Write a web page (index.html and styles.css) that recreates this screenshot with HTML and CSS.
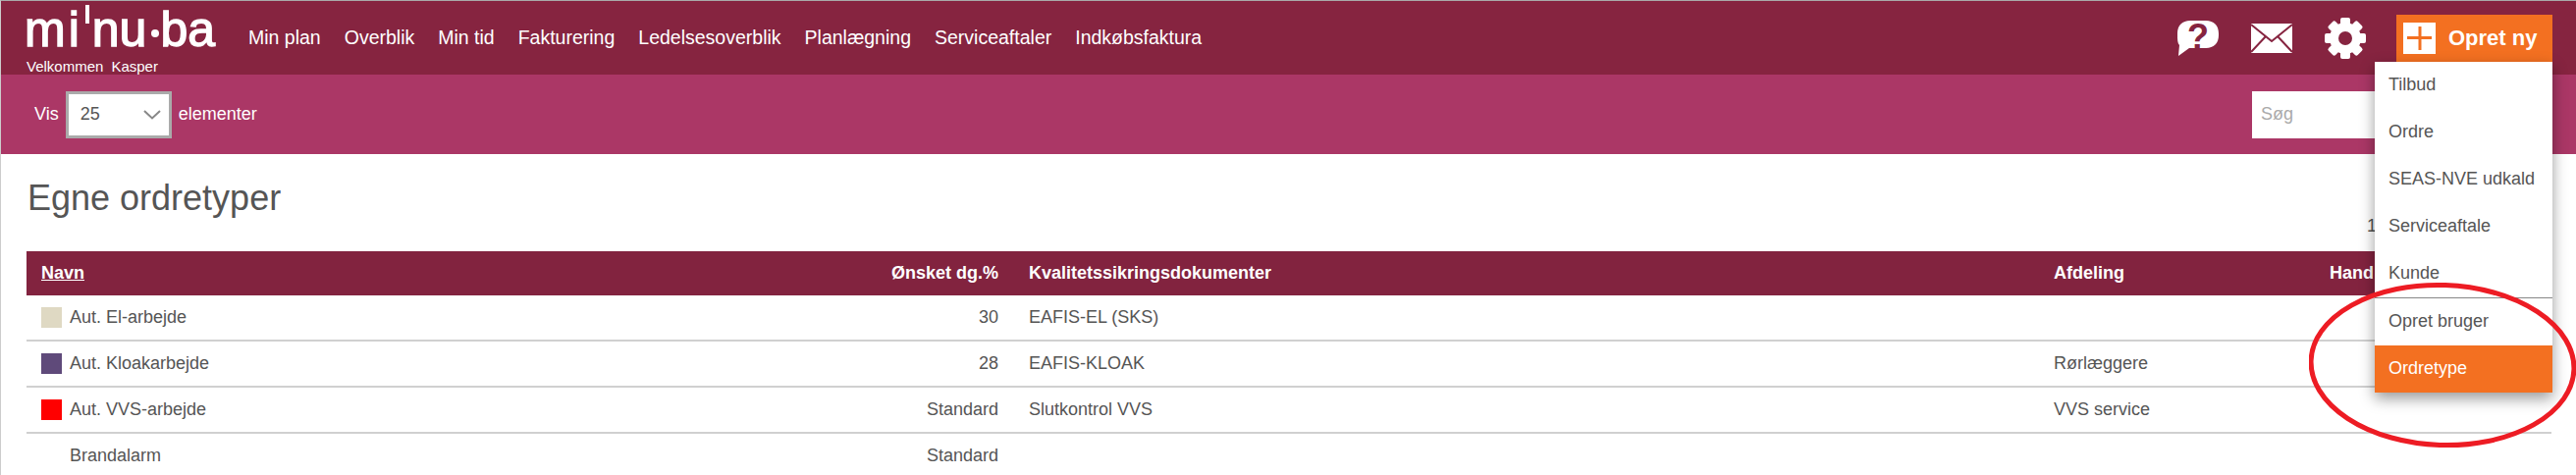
FILE: index.html
```html
<!DOCTYPE html>
<html lang="da">
<head>
    <meta charset="UTF-8">
    <meta name="viewport" content="width=device-width, initial-scale=1.0">
    <title>Egne ordretyper</title>
    <link rel="stylesheet" href="styles.css">
</head>
<body>
    <div class="page">
        <header class="top-bar">
            <div class="brand">
                <div class="logo">
                    <span class="logo-wide">mi</span>
                    <span class="logo-tick"></span>
                    <span>nu</span>
                    <span class="logo-dot"></span>
                    <span>ba</span>
                </div>
                <div class="welcome">
                    <span>Velkommen</span>
                    <span>Kasper</span>
                </div>
            </div>
            <nav class="main-nav">
                <a href="#">Min plan</a>
                <a href="#">Overblik</a>
                <a href="#">Min tid</a>
                <a href="#">Fakturering</a>
                <a href="#">Ledelsesoverblik</a>
                <a href="#">Planlægning</a>
                <a href="#">Serviceaftaler</a>
                <a href="#">Indkøbsfaktura</a>
            </nav>
            <div class="top-actions">
                <svg class="icon" width="42" height="44" viewBox="0 0 42 44">
                    <path fill="#fff" d="M13 4h16c8 0 13 5 13 13v2c0 8-5 13-13 13H12L1 40l1-11C0 27 0 23 0 19v-2C0 9 5 4 13 4z"/>
                    <text class="icon-mark" x="21" y="33" text-anchor="middle">?</text>
                </svg>
                <svg class="icon" width="42" height="30" viewBox="0 0 42 30">
                    <rect width="42" height="30" fill="#fff"/>
                    <path fill="none" stroke="#862440" stroke-width="2" d="M0 1l21 17L42 1M0 29l15-16M42 29L27 13"/>
                </svg>
                <svg class="icon" width="42" height="42" viewBox="0 0 42 42">
                    <g fill="#fff">
                        <rect x="16" y="0" width="10" height="42" rx="2"/>
                        <rect x="16" y="0" width="10" height="42" rx="2" transform="rotate(45 21 21)"/>
                        <rect x="16" y="0" width="10" height="42" rx="2" transform="rotate(90 21 21)"/>
                        <rect x="16" y="0" width="10" height="42" rx="2" transform="rotate(135 21 21)"/>
                        <circle cx="21" cy="21" r="16"/>
                    </g>
                    <circle cx="21" cy="21" r="7" fill="#862440"/>
                </svg>
                <div class="create-menu">
                    <button class="create-btn">
                        <svg width="33" height="32" viewBox="0 0 33 32">
                            <rect width="33" height="32" fill="#fff"/>
                            <path stroke="#f37021" stroke-width="3" d="M4 15.5h25M17 4v24"/>
                        </svg>
                        Opret ny
                    </button>
                    <ul class="dropdown">
                        <li>Tilbud</li>
                        <li>Ordre</li>
                        <li>SEAS-NVE udkald</li>
                        <li>Serviceaftale</li>
                        <li>Kunde</li>
                        <li class="divider">Opret bruger</li>
                        <li class="active">Ordretype</li>
                    </ul>
                </div>
            </div>
        </header>

        <div class="filter-bar">
            <span>Vis</span>
            <div class="page-size">
                25
                <svg width="18" height="10" viewBox="0 0 18 10">
                    <path fill="none" stroke="#888" stroke-width="2" d="M1 1l8 7.5L17 1"/>
                </svg>
            </div>
            <span>elementer</span>
            <div class="search">Søg</div>
        </div>

        <main class="content">
            <div class="title-row">
                <h1>Egne ordretyper</h1>
                <div class="page-info">1</div>
            </div>
            <table>
                <colgroup>
                    <col class="col-name">
                    <col class="col-margin">
                    <col class="col-docs">
                    <col class="col-dept">
                    <col class="col-action">
                </colgroup>
                <thead>
                    <tr>
                        <th><a href="#">Navn</a></th>
                        <th class="num">Ønsket dg.%</th>
                        <th>Kvalitetssikringsdokumenter</th>
                        <th>Afdeling</th>
                        <th>Hand</th>
                    </tr>
                </thead>
                <tbody>
                    <tr>
                        <td><div class="type-name"><span class="swatch swatch-sand"></span>Aut. El-arbejde</div></td>
                        <td class="num">30</td>
                        <td>EAFIS-EL (SKS)</td>
                        <td></td>
                        <td></td>
                    </tr>
                    <tr>
                        <td><div class="type-name"><span class="swatch swatch-purple"></span>Aut. Kloakarbejde</div></td>
                        <td class="num">28</td>
                        <td>EAFIS-KLOAK</td>
                        <td>Rørlæggere</td>
                        <td></td>
                    </tr>
                    <tr>
                        <td><div class="type-name"><span class="swatch swatch-red"></span>Aut. VVS-arbejde</div></td>
                        <td class="num">Standard</td>
                        <td>Slutkontrol VVS</td>
                        <td>VVS service</td>
                        <td></td>
                    </tr>
                    <tr>
                        <td><div class="type-name"><span class="swatch"></span>Brandalarm</div></td>
                        <td class="num">Standard</td>
                        <td></td>
                        <td></td>
                        <td></td>
                    </tr>
                </tbody>
            </table>
        </main>

        <!-- hand drawn marking on top of the screenshot -->
        <svg class="marking" width="280" height="175" viewBox="0 0 280 175">
            <ellipse cx="136" cy="85" rx="134" ry="81.5" fill="none" stroke="#ed1c24" stroke-width="5" transform="rotate(2 136 85)"/>
        </svg>
    </div>
</body>
</html>
```

FILE: styles.css
```css
* {
    box-sizing: border-box;
}
body {
    margin: 0;
    font-family: "Liberation Sans", Arial, sans-serif;
    font-size: 18px;
    color: #555;
    background-color: #fff;
}
a {
    color: inherit;
    text-decoration: none;
}
.page {
    position: relative;
    height: 484px;
    overflow: hidden;
    border-top: 1px solid #aaa;
    border-left: 1px solid #ccc;
}

/* top bar */
.top-bar {
    display: flex;
    align-items: center;
    height: 75px;
    padding: 0 24px 0 26px;
    background-color: #862440;
    color: #fff;
}
.brand {
    width: 226px;
}
.logo {
    display: flex;
    height: 57px;
    margin-left: -2px;
    font-size: 50px;
    line-height: 57px;
    -webkit-text-stroke: 1.4px #fff;
}
.logo-wide {
    letter-spacing: 3px;
}
.logo-tick {
    width: 4px;
    height: 19px;
    margin: 3px 3px 0 3px;
    background-color: #fff;
}
.logo-dot {
    width: 8px;
    height: 8px;
    margin: 28px 1px 0 5px;
    border-radius: 50%;
    background-color: #fff;
}
.welcome {
    display: flex;
    gap: 8px;
    font-size: 15px;
    line-height: 17px;
}
.main-nav {
    display: flex;
    gap: 24px;
    font-size: 19.5px;
}
.top-actions {
    display: flex;
    align-items: center;
    gap: 33px;
    margin-left: auto;
}
.icon-mark {
    font-family: "Liberation Sans", Arial, sans-serif;
    font-size: 36px;
    font-weight: bold;
    fill: #862440;
}
.create-menu {
    position: relative;
    margin-left: -2px;
}
.create-btn {
    display: flex;
    align-items: center;
    gap: 13px;
    width: 159px;
    height: 48px;
    padding: 0 0 0 7px;
    border: 0;
    background-color: #f37021;
    color: #fff;
    font-family: inherit;
    font-size: 22px;
    font-weight: bold;
}
.dropdown {
    position: absolute;
    top: 100%;
    right: 0;
    width: 181px;
    margin: 0;
    padding: 0;
    list-style: none;
    background-color: #fff;
    color: #555;
    font-size: 18px;
    box-shadow: 0 6px 14px rgba(0, 0, 0, 0.4);
}
.dropdown li {
    height: 48px;
    padding-left: 14px;
    line-height: 46px;
}
.dropdown .divider {
    height: 49px;
    border-top: 1px solid #888;
}
.dropdown .active {
    background-color: #f37021;
    color: #fff;
}

/* filter bar */
.filter-bar {
    display: flex;
    align-items: center;
    gap: 7px;
    height: 81px;
    padding: 0 24px 0 34px;
    background-color: #ab3766;
    color: #fff;
}
.page-size {
    display: flex;
    align-items: center;
    justify-content: space-between;
    width: 108px;
    height: 48px;
    padding: 0 8px 0 12px;
    border: 3px solid #aaa;
    background-color: #fff;
    color: #555;
}
.search {
    display: flex;
    align-items: center;
    width: 306px;
    height: 48px;
    margin-left: auto;
    padding-left: 9px;
    background-color: #fff;
    color: #aaa;
}

/* content */
.content {
    padding: 0 25px 0 26px;
}
.title-row {
    display: flex;
    justify-content: space-between;
    height: 99px;
}
h1 {
    margin: 25px 0 0 1px;
    font-size: 36px;
    font-weight: normal;
    line-height: 40px;
}
.page-info {
    align-self: flex-end;
    width: 188px;
    margin-bottom: 16px;
    font-size: 18px;
    line-height: 20px;
}
table {
    width: 100%;
    table-layout: fixed;
    border-collapse: separate;
    border-spacing: 0;
}
.col-name {
    width: 800px;
}
.col-margin {
    width: 206px;
}
.col-docs {
    width: 1044px;
}
.col-dept {
    width: 281px;
}
th {
    height: 45px;
    padding: 0 15px;
    background-color: #82233f;
    color: #fff;
    text-align: left;
}
th a {
    text-decoration: underline;
}
td {
    height: 47px;
    padding: 0 15px;
    border-bottom: 2px solid #d0d0d0;
}
th.num, td.num {
    padding-right: 16px;
    text-align: right;
}
.type-name {
    display: flex;
    align-items: center;
    gap: 8px;
}
.swatch {
    width: 21px;
    height: 21px;
}
.swatch-sand {
    background-color: #dfd9c3;
}
.swatch-purple {
    background-color: #5f4a7a;
}
.swatch-red {
    background-color: #ff0000;
}

/* red ring over the menu */
.marking {
    position: absolute;
    top: 286px;
    right: -8px;
}
```
